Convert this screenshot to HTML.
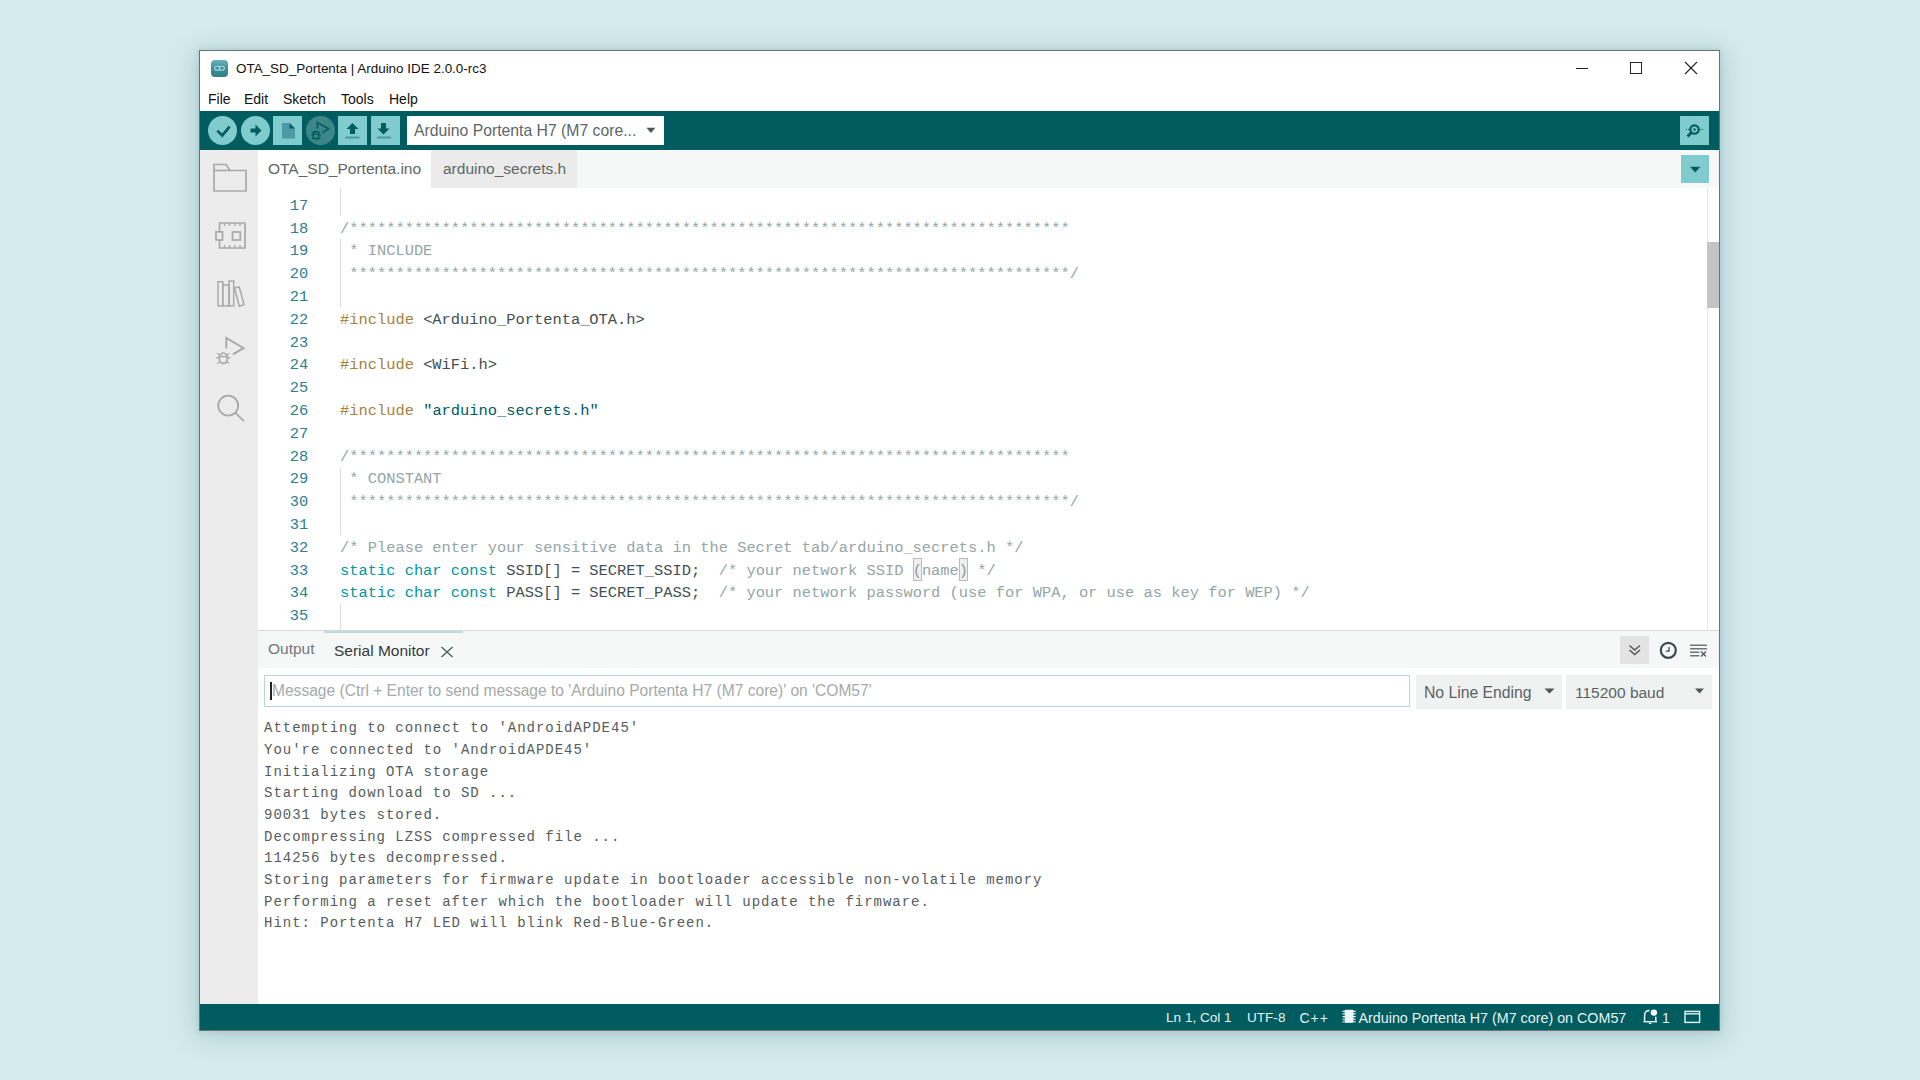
<!DOCTYPE html>
<html><head><meta charset="utf-8">
<style>
*{margin:0;padding:0;box-sizing:border-box}
html,body{width:1920px;height:1080px;overflow:hidden;background:#d5ecee;font-family:"Liberation Sans",sans-serif}
.a{position:absolute}
.t{position:absolute;white-space:pre;line-height:1}
#win{position:absolute;left:199px;top:50px;width:1521px;height:981px;background:#fff;border:1px solid #6e7172;box-shadow:0 4px 26px 4px rgba(40,90,100,.2),0 0 5px 1px rgba(40,90,100,.12)}
.code{position:absolute;white-space:pre;font-family:"Liberation Mono",monospace;font-size:15.4px;line-height:22.8px}
.c{color:#95a5a6}.p{color:#a5823c}.d{color:#434f54}.s{color:#005c5f}.k{color:#00979d}
.ser{position:absolute;white-space:pre;font-family:"Liberation Mono",monospace;font-size:14px;letter-spacing:0.977px;line-height:21.67px;color:#555c5d}
svg{position:absolute;overflow:visible}
</style></head><body>
<div id="win"></div>

<!-- title bar -->
<div class="a" style="left:211px;top:60px;width:17px;height:17px;border-radius:4px;background:linear-gradient(#67b2bc 0,#5aa6b0 20%,#3f8f98 50%,#2e7f86 100%)"></div>
<svg style="left:211px;top:60px" width="17" height="17"><g fill="none" stroke="#a8dde0" stroke-width="1.1"><ellipse cx="6.2" cy="8.3" rx="2.6" ry="2"/><ellipse cx="10.8" cy="8.3" rx="2.6" ry="2"/></g></svg>
<div class="t" id="title" style="left:236px;top:62.4px;font-size:13.45px;color:#111">OTA_SD_Portenta | Arduino IDE 2.0.0-rc3</div>
<svg style="left:0;top:0" width="1920" height="100"><g stroke="#222" stroke-width="1" fill="none" shape-rendering="crispEdges"><line x1="1576" y1="68.5" x2="1588" y2="68.5"/><rect x="1630.5" y="62.5" width="11" height="11"/></g><g stroke="#222" stroke-width="1.1" fill="none"><line x1="1685" y1="62" x2="1697" y2="74"/><line x1="1697" y1="62" x2="1685" y2="74"/></g></svg>

<!-- menu -->
<div class="t" id="mFile" style="left:208px;top:92px;font-size:14px;color:#111">File</div>
<div class="t" id="mEdit" style="left:244px;top:92px;font-size:14px;color:#111">Edit</div>
<div class="t" id="mSketch" style="left:283px;top:92px;font-size:14px;color:#111">Sketch</div>
<div class="t" id="mTools" style="left:341px;top:92px;font-size:14px;color:#111">Tools</div>
<div class="t" id="mHelp" style="left:389px;top:92px;font-size:14px;color:#111">Help</div>

<!-- toolbar -->
<div class="a" style="left:200px;top:111px;width:1519px;height:39px;background:#005c5f"></div>
<div class="a" style="left:208px;top:116px;width:29px;height:29px;border-radius:50%;background:#7fcbcd"></div>
<div class="a" style="left:241px;top:116px;width:29px;height:29px;border-radius:50%;background:#7fcbcd"></div>
<div class="a" style="left:273px;top:116px;width:29px;height:29px;background:#7fcbcd"></div>
<div class="a" style="left:306px;top:116px;width:29px;height:29px;border-radius:50%;background:#3d8688"></div>
<div class="a" style="left:338px;top:116px;width:29px;height:29px;background:#7fcbcd"></div>
<div class="a" style="left:371px;top:116px;width:29px;height:29px;background:#7fcbcd"></div>
<svg style="left:0;top:0" width="1920" height="160">
 <!-- check -->
 <path d="M217.3 130.6 L222.3 135.4 L229.6 126.6" fill="none" stroke="#005c5f" stroke-width="2.7"/>
 <!-- arrow right -->
 <path d="M250.5 128.5 H255.5 V124.5 L261.5 130.5 L255.5 136.5 V132.5 H250.5 Z" fill="#005c5f"/>
 <!-- new file -->
 <path d="M282 123 H289.5 L295 128.5 V138.5 H282 Z" fill="#4f98a6"/>
 <path d="M289.5 123 L295 128.5 H289.5 Z" fill="#005c5f"/>
 <!-- debug -->
 <path d="M317.4 128.5 V122.6 L328.6 128.7 L322.5 132.6" fill="none" stroke="#005c5f" stroke-width="1.7"/>
 <ellipse cx="316" cy="135.2" rx="2.9" ry="3.8" fill="none" stroke="#005c5f" stroke-width="1.5"/>
 <path d="M311.8 131.8 L314 132.8 M320.2 131.8 L318 132.8 M311.2 135.2 H313.2 M318.8 135.2 H320.8 M311.8 139 L313.8 137.6 M320.2 139 L318.2 137.6 M313.5 134.2 H318.5" stroke="#005c5f" stroke-width="1.2"/>
 <!-- upload -->
 <path d="M352.5 123 L358.5 129 H355 V134 H350 V129 H346.5 Z" fill="#005c5f"/>
 <rect x="345.5" y="136.5" width="14" height="2" fill="#4f98a6"/>
 <!-- download -->
 <path d="M383.5 134.5 L389.5 128.5 H386 V123 H381 V128.5 H377.5 Z" fill="#005c5f"/>
 <rect x="377" y="136.5" width="14" height="2" fill="#4f98a6"/>
</svg>
<div class="a" style="left:407px;top:116px;width:257px;height:29px;background:#fff"></div>
<div class="t" id="board" style="left:414px;top:122.9px;font-size:15.75px;color:#5d6666">Arduino Portenta H7 (M7 core...</div>
<svg style="left:0;top:0" width="1920" height="160"><path d="M646.4 127.8 H655.4 L650.9 132.9 Z" fill="#4e5757"/></svg>
<div class="a" style="left:1680px;top:116px;width:29px;height:29px;background:#7fcbcd"></div>
<svg style="left:0;top:0" width="1920" height="160" fill="none" stroke="#005c5f">
 <circle cx="1694.5" cy="129.5" r="4.2" stroke-width="2.2"/>
 <circle cx="1694.5" cy="129.5" r="1.2" fill="#005c5f" stroke="none"/>
 <line x1="1691.5" y1="132.5" x2="1687.5" y2="136.5" stroke-width="2.6"/>
 <path d="M1686 129.5 H1689 M1700 129.5 H1704" stroke-width="1" stroke-dasharray="1 1"/>
</svg>

<!-- sidebar -->
<div class="a" style="left:200px;top:150px;width:58px;height:854px;background:#ececec"></div>
<svg style="left:0;top:0" width="1920" height="1080" fill="none" stroke="#a9a9a9" stroke-width="1.7">
 <!-- folder -->
 <path d="M214 191 V164.5 H226 L230 170.5 H246 V191 Z"/>
 <path d="M214 170.5 H230"/>
 <!-- board -->
 <path d="M219.5 231.5 V223 H245 V248 H219.5 V240.5"/>
 <rect x="216" y="231.8" width="6.5" height="8.2"/>
 <rect x="232.5" y="232" width="7.8" height="8"/>
 <path d="M224.5 223 V226 M229.5 223 V226 M235 223 V226 M240 223 V226 M224.5 248 V245 M229.5 248 V245 M235 248 V245 M240 248 V245" stroke-width="1.3"/>
 <!-- library -->
 <rect x="218" y="281.7" width="4.8" height="24.2" stroke-width="1.5"/>
 <rect x="222.8" y="285" width="6.3" height="20.9" stroke-width="1.5"/>
 <rect x="229.1" y="281" width="4.6" height="24.9" stroke-width="1.5"/>
 <path d="M234.6 288 L239.2 287 L244 304.6 L239.3 306.2 Z" stroke-width="1.5"/>
 <!-- debug -->
 <path d="M226.3 348.5 V338 L243.6 348.2 L232.8 354.3" stroke-width="1.9" stroke-linejoin="miter"/>
 <ellipse cx="223.3" cy="358.2" rx="4" ry="5.2" stroke-width="1.7"/>
 <path d="M217.2 353.4 L220.3 354.8 M229.4 353.4 L226.3 354.8 M216.3 357.8 H219.3 M227.3 357.8 H230.4 M217.5 363.5 L220 361.5 M229.1 363.5 L226.6 361.5 M219.5 356.5 H227" stroke-width="1.4"/>
 <!-- search -->
 <circle cx="228.2" cy="405.6" r="10" stroke-width="1.8"/>
 <line x1="235.3" y1="412.7" x2="243.8" y2="421.2" stroke-width="1.8"/>
</svg>

<!-- tab bar -->
<div class="a" style="left:258px;top:150px;width:1461px;height:38px;background:#f6f8f8"></div>
<div class="a" style="left:258px;top:150px;width:173px;height:38px;background:#fff"></div>
<div class="a" style="left:431px;top:150px;width:146px;height:38px;background:#ebebeb"></div>
<div class="t" id="tab1" style="left:268px;top:161.4px;font-size:15.5px;color:#5d6666">OTA_SD_Portenta.ino</div>
<div class="t" id="tab2" style="left:443px;top:161px;font-size:15.5px;color:#5d6666">arduino_secrets.h</div>
<div class="a" style="left:1681px;top:155px;width:28px;height:28px;background:#7fcbcd"></div>
<svg style="left:0;top:0" width="1920" height="200"><path d="M1690 166.8 H1700.4 L1695.2 172.4 Z" fill="#005c5f"/></svg>

<!-- editor -->
<div class="a" style="left:258px;top:188px;width:1449px;height:442px;background:#fff"></div>
<div class="code" id="nums" style="left:270.3px;top:194.9px;width:38px;text-align:right;color:#2a7f90">17
18
19
20
21
22
23
24
25
26
27
28
29
30
31
32
33
34
35</div>
<div class="code" id="code" style="left:340px;top:194.9px"> 
<span class="c">/******************************************************************************</span>
<span class="c"> * INCLUDE</span>
<span class="c"> ******************************************************************************/</span>
 
<span class="p">#include</span><span class="d"> &lt;Arduino_Portenta_OTA.h&gt;</span>
 
<span class="p">#include</span><span class="d"> &lt;WiFi.h&gt;</span>
 
<span class="p">#include</span><span class="d"> </span><span class="s">&quot;arduino_secrets.h&quot;</span>
 
<span class="c">/******************************************************************************</span>
<span class="c"> * CONSTANT</span>
<span class="c"> ******************************************************************************/</span>
 
<span class="c">/* Please enter your sensitive data in the Secret tab/arduino_secrets.h */</span>
<span class="k">static char const</span><span class="d"> SSID[] = SECRET_SSID;  </span><span class="c">/* your network SSID (name) */</span>
<span class="k">static char const</span><span class="d"> PASS[] = SECRET_PASS;  </span><span class="c">/* your network password (use for WPA, or use as key for WEP) */</span>
 </div>
<!-- indent guides -->
<div class="a" style="left:340px;top:188px;width:1px;height:28px;background:#dcdcdc"></div>
<div class="a" style="left:340px;top:239px;width:1px;height:68px;background:#dcdcdc"></div>
<div class="a" style="left:340px;top:467px;width:1px;height:68px;background:#dcdcdc"></div>
<div class="a" style="left:340px;top:603px;width:1px;height:27px;background:#dcdcdc"></div>
<!-- bracket match -->
<div class="a" style="left:913px;top:558px;width:9px;height:23px;border:1px solid #b9b9b9;background:rgba(0,0,0,.06)"></div>
<div class="a" style="left:959px;top:558px;width:9px;height:23px;border:1px solid #b9b9b9;background:rgba(0,0,0,.06)"></div>
<!-- scrollbar -->
<div class="a" style="left:1707px;top:188px;width:1px;height:442px;background:#e6e6e6"></div>
<div class="a" style="left:1707px;top:242px;width:12px;height:66px;background:#c4c4c4"></div>

<!-- panel -->
<div class="a" style="left:258px;top:630px;width:1461px;height:1px;background:#d8d8d8"></div>
<div class="a" style="left:258px;top:631px;width:1461px;height:37px;background:#f6f8f8"></div>
<div class="a" style="left:324px;top:631px;width:139px;height:2px;background:#bcdcde"></div>
<div class="t" id="pOut" style="left:268px;top:640.5px;font-size:15.5px;color:#6f7878">Output</div>
<div class="t" id="pSer" style="left:334px;top:643px;font-size:15.5px;color:#333b3c">Serial Monitor</div>
<svg style="left:0;top:0" width="1920" height="1080" fill="none">
 <path d="M441.5 647 L452.5 657 M452.5 647 L441.5 657" stroke="#4e5757" stroke-width="1.25"/>
 <rect x="1620" y="636" width="29" height="28" fill="#e3e3e3"/>
 <path d="M1629.5 645.5 L1634.7 650 L1640 645.5 M1629.5 650 L1634.7 654.5 L1640 650" stroke="#555" stroke-width="1.4"/>
 <circle cx="1668.3" cy="650.3" r="7.5" stroke="#3c4a4c" stroke-width="2.2"/>
 <path d="M1669 647 V651.2 H1665.8" stroke="#3c4a4c" stroke-width="1.3"/>
 <path d="M1690 645.3 H1707 M1690 648.7 H1707 M1690 652.3 H1699.4 M1690 655.8 H1699.4" stroke="#6f7676" stroke-width="1.4"/>
 <path d="M1701 651.5 L1706 656.5 M1706 651.5 L1701 656.5" stroke="#4e5757" stroke-width="1.3"/>
</svg>
<div class="a" style="left:264px;top:675px;width:1146px;height:32px;border:1px solid #b5d7da;background:#fff"></div>
<div class="a" style="left:270px;top:682px;width:1.5px;height:18px;background:#222"></div>
<div class="t" id="ph" style="left:272px;top:683px;font-size:15.57px;color:#a6a9a9">Message (Ctrl + Enter to send message to 'Arduino Portenta H7 (M7 core)' on 'COM57'</div>
<div class="a" style="left:1416px;top:675px;width:146px;height:34px;background:#f0f2f2"></div>
<div class="t" id="nle" style="left:1424px;top:685px;font-size:15.74px;color:#596262">No Line Ending</div>
<div class="a" style="left:1566px;top:675px;width:146px;height:34px;background:#f0f2f2"></div>
<div class="t" id="baud" style="left:1575px;top:685px;font-size:15.5px;color:#596262">115200 baud</div>
<svg style="left:0;top:0" width="1920" height="1080"><path d="M1544.5 688.5 H1554.5 L1549.5 693.5 Z M1695 688.5 H1704 L1699.5 693.5 Z" fill="#4e5757"/></svg>
<div class="ser" id="ser" style="left:264px;top:718.3px">Attempting to connect to &#x27;AndroidAPDE45&#x27;
You&#x27;re connected to &#x27;AndroidAPDE45&#x27;
Initializing OTA storage
Starting download to SD ...
90031 bytes stored.
Decompressing LZSS compressed file ...
114256 bytes decompressed.
Storing parameters for firmware update in bootloader accessible non-volatile memory
Performing a reset after which the bootloader will update the firmware.
Hint: Portenta H7 LED will blink Red-Blue-Green.</div>

<!-- status bar -->
<div class="a" style="left:200px;top:1004px;width:1519px;height:26px;background:#005c5f"></div>
<div class="t" id="st1" style="left:1166px;top:1011.3px;font-size:13.58px;color:#e8f2f2">Ln 1, Col 1</div>
<div class="t" id="st2" style="left:1247px;top:1011.3px;font-size:13.57px;color:#e8f2f2">UTF-8</div>
<div class="t" id="st3" style="left:1299.5px;top:1011.2px;font-size:14px;letter-spacing:1px;color:#e8f2f2">C++</div>
<div class="t" id="st4" style="left:1358.5px;top:1010.8px;font-size:14.3px;color:#e8f2f2">Arduino Portenta H7 (M7 core) on COM57</div>
<div class="t" id="st5" style="left:1662px;top:1011px;font-size:14px;color:#e8f2f2">1</div>
<svg style="left:0;top:0" width="1920" height="1080">
 <rect x="1344.8" y="1009.8" width="8.6" height="13" rx="0.8" fill="#eef6f6"/>
 <path d="M1342.5 1011.4 H1355.7 M1342.5 1013.9 H1355.7 M1342.5 1016.6 H1355.7 M1342.5 1019.3 H1355.7 M1342.5 1021.8 H1355.7" stroke="#eef6f6" stroke-width="1.1"/>
 <path d="M1644.6 1021.4 V1015.6 C1644.6 1012.2 1646.6 1010.4 1649.6 1010.4" fill="none" stroke="#e8f2f2" stroke-width="1.5"/>
 <path d="M1655.8 1016.8 V1021.4" fill="none" stroke="#e8f2f2" stroke-width="1.5"/>
 <path d="M1643.4 1021.7 H1657" stroke="#e8f2f2" stroke-width="1.4"/>
 <path d="M1648.8 1023.3 H1651.4" stroke="#e8f2f2" stroke-width="1.3"/>
 <circle cx="1653.9" cy="1012.6" r="3.2" fill="#f4fafa"/>
 <rect x="1685" y="1011.4" width="14.6" height="11" fill="none" stroke="#e8f2f2" stroke-width="1.4"/>
 <line x1="1685" y1="1013.8" x2="1699.6" y2="1013.8" stroke="#e8f2f2" stroke-width="1.4"/>
</svg>

</body></html>
